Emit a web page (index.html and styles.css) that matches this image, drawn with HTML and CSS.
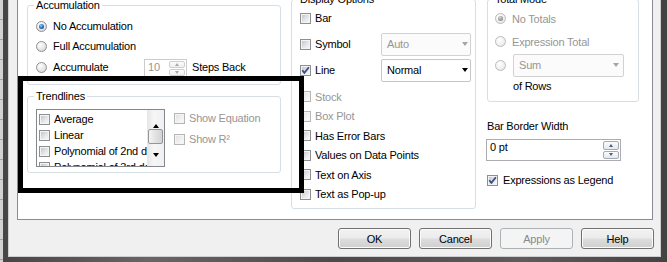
FILE: index.html
```html
<!DOCTYPE html>
<html lang="en">
<head>
    <meta charset="UTF-8">
    <meta name="viewport" content="width=device-width, initial-scale=1.0">
    <title>Chart Properties - Expressions</title>
    <link rel="stylesheet" href="styles.css">
</head>
<body>
    <div class="desk"></div>
    <div class="frame">
        <div class="client">
            <div class="panel">
                <div class="col">
                    <fieldset class="group group-accum">
                        <legend>Accumulation</legend>
                        <div class="opt"><span class="radio on"></span>No Accumulation</div>
                        <div class="opt"><span class="radio"></span>Full Accumulation</div>
                        <div class="opt opt-steps">
                            <span class="radio"></span>
                            <span class="steps-label">Accumulate</span>
                            <span class="spin spin-steps off">
                                <span class="spin-val">10</span>
                                <span class="spin-btns"><span class="spin-btn up"></span><span class="spin-btn down"></span></span>
                            </span>
                            <span class="steps-back">Steps Back</span>
                        </div>
                    </fieldset>

                    <fieldset class="group group-trend">
                        <legend>Trendlines</legend>
                        <div class="trend-body">
                            <div class="listbox">
                                <div class="list-items">
                                    <div class="item"><span class="check"></span>Average</div>
                                    <div class="item"><span class="check"></span>Linear</div>
                                    <div class="item"><span class="check"></span>Polynomial of 2nd degree</div>
                                    <div class="item"><span class="check"></span>Polynomial of 3rd degree</div>
                                </div>
                                <div class="scrollbar">
                                    <span class="sb-btn sb-up"></span>
                                    <span class="sb-track"><span class="sb-thumb"></span></span>
                                    <span class="sb-btn sb-down"></span>
                                </div>
                            </div>
                            <div class="trend-opts">
                                <div class="opt off"><span class="check off"></span>Show Equation</div>
                                <div class="opt opt-r2 off"><span class="check off"></span>Show R²</div>
                            </div>
                        </div>
                    </fieldset>
                </div>

                <div class="col">
                    <fieldset class="group group-display">
                        <legend>Display Options</legend>
                        <div class="opt opt-bar"><span class="check"></span>Bar</div>
                        <div class="opt opt-combo opt-symbol">
                            <span class="opt-label"><span class="check"></span>Symbol</span>
                            <span class="combo off">Auto<span class="caret"></span></span>
                        </div>
                        <div class="opt opt-combo">
                            <span class="opt-label">
                                <span class="check">
                                    <svg class="tick" viewBox="0 0 11 11"><path d="M2.3 5.2 4.4 7.9 8.9 2.2"/></svg>
                                </span>Line
                            </span>
                            <span class="combo">Normal<span class="caret"></span></span>
                        </div>
                        <div class="opt opt-stock off"><span class="check off"></span>Stock</div>
                        <div class="opt off"><span class="check off"></span>Box Plot</div>
                        <div class="opt"><span class="check"></span>Has Error Bars</div>
                        <div class="opt"><span class="check"></span>Values on Data Points</div>
                        <div class="opt"><span class="check"></span>Text on Axis</div>
                        <div class="opt"><span class="check"></span>Text as Pop-up</div>
                    </fieldset>
                </div>

                <div class="col col-right">
                    <fieldset class="group group-total">
                        <legend>Total Mode</legend>
                        <div class="opt off"><span class="radio off on"></span>No Totals</div>
                        <div class="opt opt-expr off"><span class="radio off"></span>Expression Total</div>
                        <div class="opt opt-sum">
                            <span class="radio off"></span>
                            <span class="combo combo-sum off">Sum<span class="caret"></span></span>
                        </div>
                        <div class="of-rows">of Rows</div>
                    </fieldset>

                    <div class="field-label">Bar Border Width</div>
                    <div class="spin spin-width">
                        <span class="spin-val">0 pt</span>
                        <span class="spin-btns"><span class="spin-btn up"></span><span class="spin-btn down"></span></span>
                    </div>

                    <div class="opt opt-legend">
                        <span class="check">
                            <svg class="tick" viewBox="0 0 11 11"><path d="M2.3 5.2 4.4 7.9 8.9 2.2"/></svg>
                        </span>Expressions as Legend
                    </div>
                </div>
            </div>

            <div class="buttons">
                <button class="btn">OK</button>
                <button class="btn">Cancel</button>
                <button class="btn" disabled>Apply</button>
                <button class="btn">Help</button>
            </div>
        </div>
    </div>

    <!-- highlight drawn over the screenshot -->
    <div class="callout"></div>
</body>
</html>
```

FILE: styles.css
```css
* {
    margin: 0;
    padding: 0;
    box-sizing: border-box;
}

body {
    width: 667px;
    height: 262px;
    overflow: hidden;
    position: relative;
    display: flex;
    font-family: "Liberation Sans", Arial, sans-serif;
    font-size: 11px;
    letter-spacing: -0.2px;
    color: #000;
    background: #4e4e4e;
}

/* window frame */

.desk {
    width: 3px;
    background:
        repeating-linear-gradient(180deg, transparent 0 19px, #a4a4a4 19px 20px),
        #d2d2d2;
}

.frame {
    flex: 1;
    padding: 0 6px 5px 5px;
    background: linear-gradient(90deg, #464646 0%, #666 22%, #4a4a4a 50%, #5c5c5c 78%, #434343 100%);
}

.client {
    height: 100%;
    display: flex;
    flex-direction: column;
    padding: 0 6px 7px 8px;
    background: #f0f0f0;
    border: 1px solid #cfcfcf;
    border-top: 0;
}

.panel {
    height: 220px;
    margin-right: 1px;
    padding-left: 9px;
    display: grid;
    grid-template-columns: 254px 185px 153px;
    column-gap: 10px;
    align-items: start;
    background: #fff;
    border: 1px solid #898c95;
    border-top: 0;
}

/* group boxes */

.group {
    min-width: 0;
    border: 1px solid #d5dfe5;
    border-radius: 3px;
    padding: 0 4px 0 8px;
}

.group legend {
    line-height: 13px;
    padding: 0 2px;
    margin-left: -2px;
}

.group-accum {
    margin-top: -1px;
    padding-top: 4px;
    padding-bottom: 7px;
}

.group-trend {
    margin-top: 5px;
    padding-top: 6px;
    padding-bottom: 5px;
}

.group-display {
    margin-top: -7px;
    padding-top: 2px;
    padding-bottom: 4px;
}

.group-total {
    margin-top: -7px;
    margin-left: 1px;
    padding: 2.5px 4px 5px 7px;
}

/* option rows */

.opt {
    display: flex;
    align-items: center;
    height: 20px;
    white-space: nowrap;
}

.off {
    color: #969696;
}

.opt-steps {
    margin-top: 1px;
}

.steps-label {
    width: 91px;
}

.steps-back {
    margin-left: 5px;
}

.radio {
    flex: none;
    position: relative;
    width: 11px;
    height: 11px;
    margin-right: 6px;
    border: 1px solid #8f8f8f;
    border-radius: 50%;
    background: radial-gradient(circle at 35% 30%, #fff 0, #e6e6e6 55%, #cdcdcd 100%);
}

.radio.on::after {
    content: "";
    position: absolute;
    inset: 2px;
    border-radius: 50%;
    background: radial-gradient(circle at 40% 35%, #9fd4f7 0, #2f86cf 40%, #0d3f7a 90%);
}

.radio.off {
    border-color: #bababa;
    background: radial-gradient(circle at 35% 30%, #fff 0, #f0f0f0 55%, #e2e2e2 100%);
}

.radio.off.on::after {
    background: radial-gradient(circle at 40% 35%, #dcdcdc 0, #9c9c9c 50%, #7c7c7c 100%);
}

.check {
    flex: none;
    position: relative;
    width: 11px;
    height: 11px;
    margin-right: 4px;
    padding: 1px;
    border: 1px solid #8e8f8f;
    background: #f4f4f4;
}

.check::before {
    content: "";
    display: block;
    width: 100%;
    height: 100%;
    background: linear-gradient(135deg, #c3c7cc 0%, #e4e5e7 55%, #f7f7f7 100%);
}

.check.off {
    border-color: #b6b6b6;
}

.check.off::before {
    background: linear-gradient(135deg, #e3e3e3, #fafafa);
}

.tick {
    position: absolute;
    left: -1px;
    top: -1px;
    width: 11px;
    height: 11px;
    fill: none;
    stroke: #3a4b86;
    stroke-width: 1.8;
}

/* combos and spinners */

.combo {
    width: 90px;
    height: 23px;
    display: flex;
    align-items: center;
    justify-content: space-between;
    padding: 0 2px 0 5px;
    background: #fff;
    border: 1px solid #c6c6c6;
    border-radius: 2px;
    color: #000;
}

.combo.off {
    color: #969696;
    background: #fbfbfb;
    border-color: #d2d2d2;
}

.caret {
    width: 0;
    height: 0;
    border-left: 3.5px solid transparent;
    border-right: 3.5px solid transparent;
    border-top: 4px solid #000;
}

.combo.off .caret {
    border-top-color: #a6a6a6;
}

.combo-sum {
    width: 111px;
    margin-left: 1px;
    padding-right: 4px;
    border-color: #b5b7bd;
    background: #fff;
}

.spin {
    display: flex;
    padding: 1px;
    background: #fff;
    border: 1px solid #abadb3;
}

.spin-val {
    flex: 1;
    line-height: 13px;
    padding-left: 2px;
}

.spin-btns {
    width: 16px;
    display: flex;
    flex-direction: column;
    gap: 1px;
}

.spin-btn {
    flex: 1;
    display: flex;
    align-items: center;
    justify-content: center;
    border: 1px solid #a3aab4;
    border-radius: 2px;
    background: linear-gradient(#fbfbfb, #e6e8ec);
}

.spin-btn::after {
    content: "";
    border-left: 2.5px solid transparent;
    border-right: 2.5px solid transparent;
}

.spin-btn.up::after {
    border-bottom: 3px solid #4a5d87;
}

.spin-btn.down::after {
    border-top: 3px solid #4a5d87;
}

.spin-steps {
    width: 43px;
    height: 19px;
    margin-top: 2px;
    border-color: #cccccc;
}

.spin-steps .spin-val {
    color: #969696;
}

.spin-steps .spin-btn {
    border-color: #cfcfcf;
    background: linear-gradient(#fcfcfc, #efefef);
}

.spin-steps .spin-btn.up::after {
    border-bottom-color: #a8a8a8;
}

.spin-steps .spin-btn.down::after {
    border-top-color: #a8a8a8;
}

.spin-width {
    width: 135px;
    height: 22px;
    margin-top: 6px;
}

/* trendlines list */

.trend-body {
    display: flex;
    align-items: flex-start;
}

.listbox {
    width: 129px;
    height: 58px;
    display: flex;
    background: #fff;
    border: 1px solid #828790;
}

.list-items {
    flex: 1;
    min-width: 0;
    overflow: hidden;
    padding: 1px 0 0 2px;
}

.item {
    height: 16px;
    display: flex;
    align-items: center;
    white-space: nowrap;
}

.scrollbar {
    width: 17px;
    display: flex;
    flex-direction: column;
    background: linear-gradient(90deg, #e6e6e6, #f6f6f6 40%, #f0f0f0);
}

.sb-btn {
    display: flex;
    justify-content: center;
}

.sb-up {
    height: 18px;
    padding-top: 8px;
}

.sb-up::after {
    content: "";
    border-left: 3.5px solid transparent;
    border-right: 3.5px solid transparent;
    border-bottom: 4px solid #000;
}

.sb-down {
    height: 17px;
    padding-top: 4px;
}

.sb-down::after {
    content: "";
    border-left: 3.5px solid transparent;
    border-right: 3.5px solid transparent;
    border-top: 4px solid #000;
    height: 0;
}

.sb-track {
    flex: 1;
    padding: 1px 1px 0;
}

.sb-thumb {
    display: block;
    height: 15px;
    border: 1px solid #959595;
    border-radius: 2px;
    background: linear-gradient(90deg, #f4f4f4, #e2e2e2 50%, #d3d3d3);
}

.trend-opts {
    margin-left: 9px;
    margin-top: -1px;
}

.opt-r2 {
    margin-top: 1px;
}

/* display options */

.group-display .opt {
    height: 19.5px;
}

.group-display .opt-bar {
    height: 20px;
}

.group-display .opt-combo {
    height: 26px;
    justify-content: space-between;
}

.opt-label {
    display: flex;
    align-items: center;
}

.opt-symbol {
    margin-top: 3px;
}

.opt-stock {
    margin-top: 4px;
}

/* total mode column */

.opt-expr {
    margin-top: 3px;
}

.opt-sum {
    height: 24px;
    margin-top: 1.5px;
}

.of-rows {
    height: 19px;
    line-height: 19px;
    padding-left: 18px;
}

.field-label {
    margin-top: 18px;
    margin-left: 1px;
    line-height: 13px;
}

.opt-legend {
    margin-top: 9px;
    margin-left: 1px;
}

.opt-legend .check {
    margin-right: 5px;
}

/* dialog buttons */

.buttons {
    display: flex;
    justify-content: flex-end;
    gap: 8px;
    margin-top: 8px;
}

.btn {
    width: 73px;
    height: 21px;
    font: inherit;
    letter-spacing: inherit;
    color: #000;
    border: 1px solid #707070;
    border-radius: 3px;
    background: linear-gradient(#f2f2f2 0%, #ebebeb 48%, #dddddd 52%, #cfcfcf 100%);
    box-shadow: inset 0 0 0 1px #fbfbfb;
}

.btn:disabled {
    color: #8a8a8a;
    border-color: #adb2b5;
    background: #f4f4f4;
    box-shadow: none;
}

/* black highlight rectangle over the screenshot */

.callout {
    position: absolute;
    left: 18px;
    top: 76px;
    width: 286px;
    height: 117px;
    border: 5px solid #000;
}
```
